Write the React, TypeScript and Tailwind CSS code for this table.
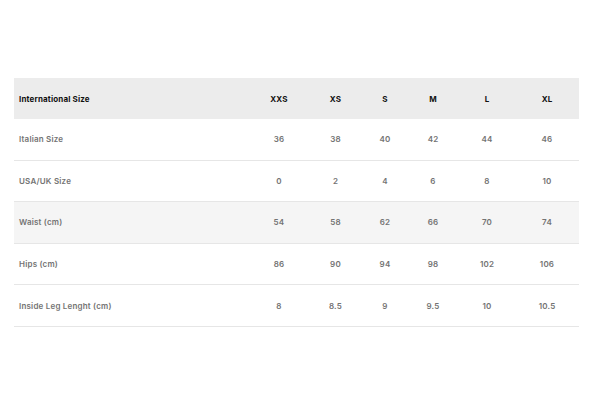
import React from "react";

const sizes = ["XXS", "XS", "S", "M", "L", "XL"];
const rows: { label: string; values: string[]; bg?: string }[] = [
  { label: "Italian Size", values: ["36", "38", "40", "42", "44", "46"] },
  { label: "USA/UK Size", values: ["0", "2", "4", "6", "8", "10"] },
  { label: "Waist (cm)", values: ["54", "58", "62", "66", "70", "74"], bg: "bg-[#f5f5f5]" },
  { label: "Hips (cm)", values: ["86", "90", "94", "98", "102", "106"] },
  { label: "Inside Leg Lenght (cm)", values: ["8", "8.5", "9", "9.5", "10", "10.5"] },
];

const cols = "grid grid-cols-[236px_58px_55px_44px_52px_56px_64px]";

export default function App() {
  return (
    <div className="w-[600px] h-[400px] bg-white pt-[78px] pl-[14px]" style={{ fontFamily: "Inter, 'Liberation Sans', sans-serif" }}>
      <div className="w-[565px]">
        <div className={`${cols} h-[41px] items-center bg-[#ececec] text-[8px] font-bold tracking-[0.15px] text-[#111]`}>
          <div className="pl-[5px]">International Size</div>
          {sizes.map((s) => (
            <div key={s} className="text-center">{s}</div>
          ))}
        </div>
        {rows.map((r) => (
          <div key={r.label} className={`${cols} h-[41.6px] items-center border-b border-[#e6e6e6] text-[8px] font-semibold tracking-[0.2px] text-[#737373] ${r.bg ?? ""}`}>
            <div className="pl-[5px]">{r.label}</div>
            {r.values.map((v, i) => (
              <div key={i} className="text-center">{v}</div>
            ))}
          </div>
        ))}
      </div>
    </div>
  );
}
